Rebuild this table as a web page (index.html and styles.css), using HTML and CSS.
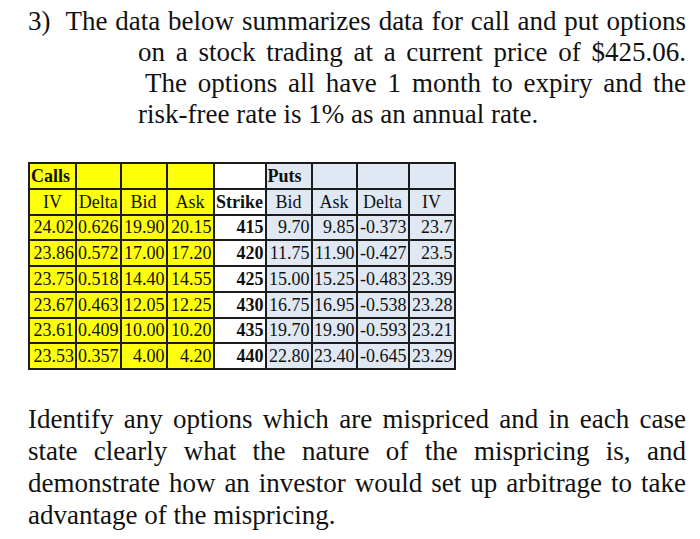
FILE: index.html
```html
<!DOCTYPE html>
<html>
<head>
<meta charset="utf-8">
<link rel="stylesheet" href="styles.css">
</head>
<body>
<div class="page">
  <div class="question">
    <div class="line"><div class="txt just">3)&nbsp; The data below summarizes data for call and put options</div></div>
    <div class="line indent"><div class="txt just">on a stock trading at a current price of $425.06.</div></div>
    <div class="line indent2"><div class="txt just">The options all have 1 month to expiry and the</div></div>
    <div class="line indent"><div class="txt">risk-free rate is 1% as an annual rate.</div></div>
  </div>

  <table class="opts">
    <colgroup>
      <col style="width:47px"><col style="width:44px"><col style="width:46px"><col style="width:47px">
      <col style="width:52px">
      <col style="width:46px"><col style="width:45px"><col style="width:52px"><col style="width:46px">
    </colgroup>
    <tr>
      <td class="c b left">Calls</td><td class="c"></td><td class="c"></td><td class="c"></td>
      <td class="s"></td>
      <td class="p b left">Puts</td><td class="p"></td><td class="p"></td><td class="p"></td>
    </tr>
    <tr>
      <td class="c ctr">IV</td><td class="c ctr">Delta</td><td class="c ctr">Bid</td><td class="c ctr">Ask</td>
      <td class="s b ctr">Strike</td>
      <td class="p ctr">Bid</td><td class="p ctr">Ask</td><td class="p ctr">Delta</td><td class="p ctr">IV</td>
    </tr>
    <tr>
      <td class="c">24.02</td><td class="c">0.626</td><td class="c">19.90</td><td class="c">20.15</td>
      <td class="s b">415</td>
      <td class="p">9.70</td><td class="p">9.85</td><td class="p">-0.373</td><td class="p">23.7</td>
    </tr>
    <tr>
      <td class="c">23.86</td><td class="c">0.572</td><td class="c">17.00</td><td class="c">17.20</td>
      <td class="s b">420</td>
      <td class="p">11.75</td><td class="p">11.90</td><td class="p">-0.427</td><td class="p">23.5</td>
    </tr>
    <tr>
      <td class="c">23.75</td><td class="c">0.518</td><td class="c">14.40</td><td class="c">14.55</td>
      <td class="s b">425</td>
      <td class="p">15.00</td><td class="p">15.25</td><td class="p">-0.483</td><td class="p">23.39</td>
    </tr>
    <tr>
      <td class="c">23.67</td><td class="c">0.463</td><td class="c">12.05</td><td class="c">12.25</td>
      <td class="s b">430</td>
      <td class="p">16.75</td><td class="p">16.95</td><td class="p">-0.538</td><td class="p">23.28</td>
    </tr>
    <tr>
      <td class="c">23.61</td><td class="c">0.409</td><td class="c">10.00</td><td class="c">10.20</td>
      <td class="s b">435</td>
      <td class="p">19.70</td><td class="p">19.90</td><td class="p">-0.593</td><td class="p">23.21</td>
    </tr>
    <tr>
      <td class="c">23.53</td><td class="c">0.357</td><td class="c">4.00</td><td class="c">4.20</td>
      <td class="s b">440</td>
      <td class="p">22.80</td><td class="p">23.40</td><td class="p">-0.645</td><td class="p">23.29</td>
    </tr>
  </table>

  <div class="task">
    <div class="line tl"><div class="txt just">Identify any options which are mispriced and in each case</div></div>
    <div class="line tl"><div class="txt just">state clearly what the nature of the mispricing is, and</div></div>
    <div class="line tl"><div class="txt just">demonstrate how an investor would set up arbitrage to take</div></div>
    <div class="line tl"><div class="txt">advantage of the mispricing.</div></div>
  </div>
</div>
</body>
</html>
```

FILE: styles.css
```css
html, body {
  margin: 0;
  padding: 0;
  background: #ffffff;
}

.page {
  font-family: "Liberation Serif", "Times New Roman", Times, serif;
  color: #111111;
  padding: 6px 14px 0 28px;
  width: 658px;
}

/* Body text is laid out at 20px and scaled to ~27px. */
.line {
  height: 31px;
}

.line.tl {
  height: 32px;
}

.txt {
  font-size: 20px;
  line-height: 22.96px;
  white-space: nowrap;
  width: calc(100% / 1.35);
  transform: scale(1.35);
  transform-origin: 0 0;
}

.tl .txt {
  line-height: 23.7px;
}

.just {
  text-align: justify;
  text-align-last: justify;
}

.indent {
  margin-left: 110px;
}

.indent2 {
  margin-left: 117px;
}

.opts {
  border-collapse: collapse;
  table-layout: fixed;
  margin-top: 32px;
  font-size: 18px;
  line-height: 20px;
}

.opts td {
  border: 2px solid #1c1c1c;
  height: 23.75px;
  padding: 0 1px;
  text-align: right;
  white-space: nowrap;
  overflow: hidden;
}

.opts td.c {
  background: #ffff0a;
}

.opts td.p {
  background: #dfe8f3;
}

.opts td.s {
  background: #ffffff;
}

.opts td.b {
  font-weight: bold;
}

.opts td.left {
  text-align: left;
}

.opts td.ctr {
  text-align: center;
}

.task {
  margin-top: 34px;
}
```
